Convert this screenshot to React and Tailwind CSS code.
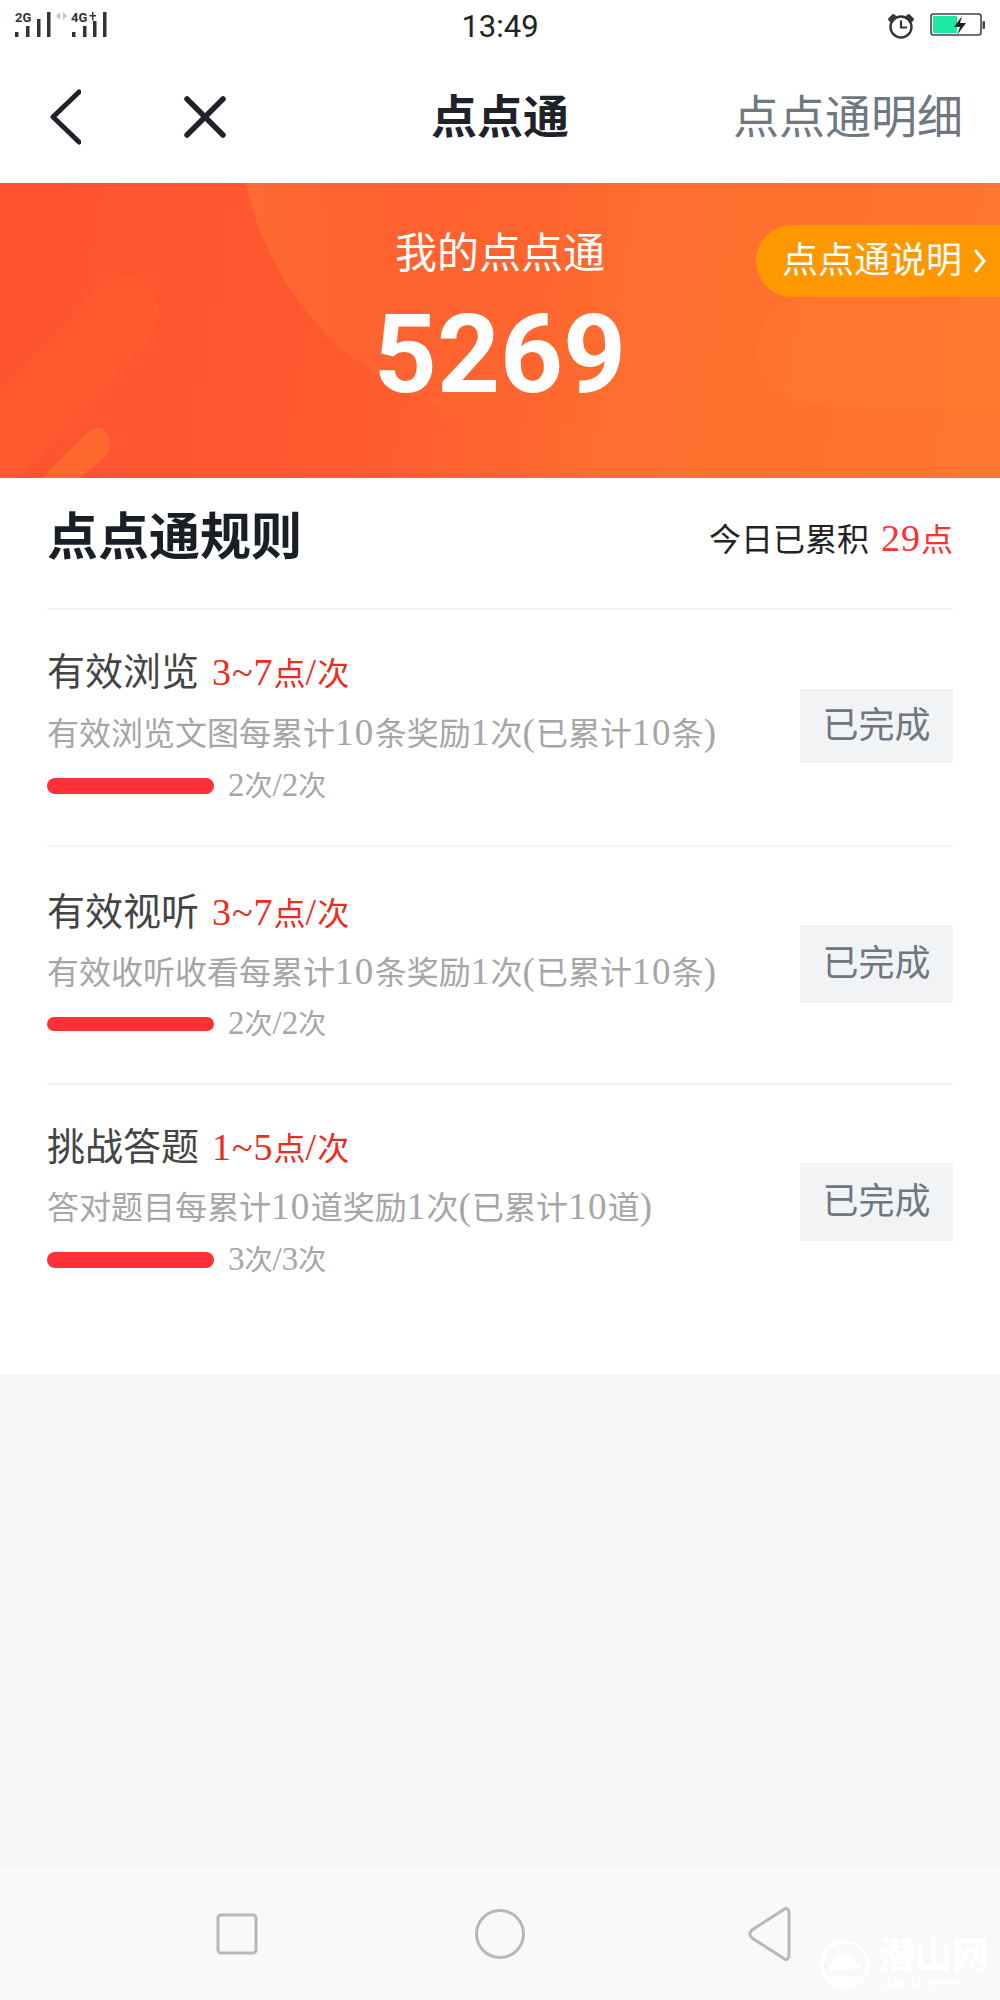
import React from 'react';

const serif = 'font-["Liberation_Serif","Noto_Sans_CJK_SC",serif]';
const sans = 'font-["Roboto","Noto_Sans_CJK_SC",sans-serif]';

const rules = [
  {
    title: '有效浏览',
    points: '3~7',
    desc: '有效浏览文图每累计10条奖励1次(已累计10条)',
    count: '2次/2次',
    rowClass: 'h-[237px] pt-[39px] border-b-2',
    descClass: 'mt-[16px]',
    barRowClass: 'mt-[13px]',
    barClass: 'h-[16px]',
    btnClass: 'h-[74px] mt-[40px]',
  },
  {
    title: '有效视听',
    points: '3~7',
    desc: '有效收听收看每累计10条奖励1次(已累计10条)',
    count: '2次/2次',
    rowClass: 'h-[238px] pt-[42px] border-b-2',
    descClass: 'mt-[15px]',
    barRowClass: 'mt-[12px]',
    barClass: 'h-[14px]',
    btnClass: 'h-[78px] mt-[36px]',
  },
  {
    title: '挑战答题',
    points: '1~5',
    desc: '答对题目每累计10道奖励1次(已累计10道)',
    count: '3次/3次',
    rowClass: 'h-[236px] pt-[39px]',
    descClass: 'mt-[15px]',
    barRowClass: 'mt-[13px]',
    barClass: 'h-[16px]',
    btnClass: 'h-[78px] mt-[39px]',
  },
];

// latin runs sit larger than the CJK around them in the reference
function Mixed({ text, latinClass }) {
  return text.split(/([0-9~/()]+)/).map((part, i) =>
    i % 2 === 1 ? (
      <span key={i} className={latinClass}>
        {part}
      </span>
    ) : (
      part
    )
  );
}

function StatusBar() {
  return (
    <div className={`h-[55px] grid grid-cols-[1fr_auto_1fr] items-start ${sans}`}>
      <svg width="120" height="55" viewBox="0 0 120 55">
        <g fill="#333">
          <text x="15" y="22" fontSize="13" fontWeight="700" fontFamily="Roboto">2G</text>
          <rect x="15" y="32" width="3.5" height="5" />
          <rect x="26" y="26" width="3.5" height="11" />
          <rect x="37" y="19" width="3.5" height="18" />
          <rect x="47" y="12" width="3.5" height="25" />
          <text x="71" y="22" fontSize="13" fontWeight="700" fontFamily="Roboto">4G</text>
          <path d="M92 12h1.5v3h2.5v1.5h-2.5v4h-1.5v-4h-2.5V15h2.5z" />
          <rect x="72" y="32" width="3.5" height="5" />
          <rect x="83" y="26" width="3.5" height="11" />
          <rect x="93" y="21" width="3.5" height="16" />
          <rect x="103" y="12" width="3.5" height="25" />
        </g>
        <path d="M60 12v8l-4-4zM63 12v8l4-4z" fill="#c4c4c4" />
      </svg>
      <span className="text-[31px] leading-[54px] text-[#222]">13:49</span>
      <div className="flex items-start justify-end gap-[15px] pr-[15px] pt-[12px]">
        <svg width="28" height="27" viewBox="0 0 28 27" fill="none" stroke="#333">
          <circle cx="14" cy="15" r="10.5" strokeWidth="2.4" />
          <path d="M14 8.5v7h6" strokeWidth="2.2" />
          <path d="M1 7l5-5 3 2-6 6zM27 7l-5-5-3 2 6 6z" fill="#333" strokeWidth="0.5" />
        </svg>
        <svg width="55" height="24" viewBox="0 0 55 24" className="mt-[1px]">
          <rect x="1" y="1" width="50" height="21" rx="2.5" fill="#fff" stroke="#444" strokeWidth="1.6" />
          <rect x="3" y="3" width="24" height="17" fill="#1de9a4" />
          <rect x="52.5" y="8" width="2.5" height="8" rx="1" fill="#444" />
          <path d="M32 3l-8 11h6l-3 8 9-12h-6z" fill="#222" />
        </svg>
      </div>
    </div>
  );
}

function TopNav() {
  return (
    <div className={`h-[128px] grid grid-cols-[1fr_auto_1fr] items-center pb-[4px] ${sans}`}>
      <div className="flex items-center gap-[103px] pl-[50px]">
        <svg width="31" height="56" viewBox="0 0 31 56" fill="none" stroke="#1f2329" strokeWidth="5" strokeLinecap="round" strokeLinejoin="round">
          <path d="M29 3L3 28l26 25" />
        </svg>
        <svg width="42" height="42" viewBox="0 0 42 42" fill="none" stroke="#1f2329" strokeWidth="5.5" strokeLinecap="round">
          <path d="M3 3l36 36M39 3L3 39" />
        </svg>
      </div>
      <h1 className="text-[46px] font-bold text-[#1f2329] leading-none">点点通</h1>
      <span className="text-[46px] text-[#6f7780] leading-none whitespace-nowrap justify-self-end pr-[37px]">点点通明细</span>
    </div>
  );
}

function Banner() {
  return (
    <section className={`relative h-[295px] overflow-hidden bg-[linear-gradient(100deg,#ff5230_0%,#ff5a30_38%,#ff6d2f_62%,#ff772e_100%)] ${sans}`}>
      <svg className="absolute inset-0" width="1000" height="295" viewBox="0 0 1000 295">
        <defs>
          <linearGradient id="arc" x1="240" x2="520" y1="0" y2="0" gradientUnits="userSpaceOnUse">
            <stop offset="0" stopColor="#ff7330" stopOpacity="0.7" />
            <stop offset="1" stopColor="#ff7330" stopOpacity="0" />
          </linearGradient>
        </defs>
        <circle cx="540" cy="-60" r="300" fill="url(#arc)" />
        <path d="M0 205L90 112c20-24 55-26 66 2 6 16 3 30-8 44L20 295H0z" fill="#ff7a2e" opacity="0.16" />
        <path d="M42 295L85 252c8-10 20-10 24 2 3 8 0 14-4 20L80 295z" fill="#ff7a2e" opacity="0.55" />
        <path d="M759 170c0-50 40-80 110-80h131v135H860c-60 0-101-10-101-55z" fill="#ff8430" opacity="0.22" />
      </svg>
      <div className="relative flex flex-col items-center text-white pt-[45px]">
        <p className="text-[42px] leading-[52px]">我的点点通</p>
        <p className="text-[110px] font-bold leading-[132px] mt-[9px]">5269</p>
      </div>
      <div className="absolute right-0 top-[42px] w-[244px] h-[72px] rounded-l-[36px] bg-[#ff9800] flex items-center pl-[26px] text-white text-[36px] whitespace-nowrap">
        点点通说明
        <svg width="16" height="28" viewBox="0 0 16 28" fill="none" stroke="#fff" strokeWidth="3" className="ml-[10px]">
          <path d="M3 3l9 11-9 11" />
        </svg>
      </div>
    </section>
  );
}

function RuleRow({ rule }) {
  return (
    <div className={`${rule.rowClass} flex items-start justify-between border-[#f4f4f6]`}>
      <div>
        <div className="flex items-baseline h-[46px]">
          <span className="text-[38px] leading-[46px] text-[#444]">{rule.title}</span>
          <span className="text-[32px] leading-[46px] text-[#ee2a20] ml-[13px]">
            <Mixed text={`${rule.points}点/次`} latinClass="text-[38px] tracking-[1px]" />
          </span>
        </div>
        <p className={`${rule.descClass} h-[44px] text-[32px] leading-[44px] text-[#a6a6a6] whitespace-nowrap`}>
          <Mixed text={rule.desc} latinClass="text-[37px] tracking-[1.3px]" />
        </p>
        <div className={`${rule.barRowClass} flex items-center gap-[14px] h-[36px]`}>
          <div className={`${rule.barClass} w-[167px] rounded-full bg-[#ff3036]`} />
          <span className="text-[28px] leading-[36px] text-[#a6a6a6]">
            <Mixed text={rule.count} latinClass="text-[33px]" />
          </span>
        </div>
      </div>
      <div className={`${rule.btnClass} w-[153px] bg-[#f2f3f5] flex items-center justify-center text-[36px] text-[#6f7780] ${sans}`}>
        已完成
      </div>
    </div>
  );
}

function Rules() {
  return (
    <section className={`bg-white px-[47px] h-[897px] ${serif}`}>
      <div className="h-[132px] flex items-center justify-between border-b-2 border-[#f4f4f6] pb-[10px]">
        <h2 className="text-[51px] font-bold text-[#1a1f26] leading-none">点点通规则</h2>
        <p className="text-[32px] text-[#222] leading-none flex items-baseline">
          今日已累积
          <span className="text-[#ff3030] ml-[12px]">
            <Mixed text="29点" latinClass="text-[38px] tracking-[1px]" />
          </span>
        </p>
      </div>
      {rules.map((rule) => (
        <RuleRow key={rule.title} rule={rule} />
      ))}
    </section>
  );
}

function SystemNav() {
  return (
    <div className="relative h-[133px] bg-[#f9f9f9] flex items-center justify-center">
      <svg width="1000" height="60" viewBox="0 0 1000 60" fill="none" stroke="#b8b8b8" strokeWidth="3">
        <rect x="218" y="11" width="38" height="38" rx="3" />
        <circle cx="500" cy="30" r="23.5" />
        <path d="M783 6c3-3 6-1 6 3v42c0 4-3 6-6 3L752 34c-3-3-3-5 0-8z" />
      </svg>
      {/* watermark */}
      <div className="absolute left-[820px] top-[72px] flex items-start gap-[8px] text-white">
        <svg width="50" height="52" viewBox="0 0 50 52" fill="none" stroke="#fff" strokeWidth="3">
          <circle cx="25" cy="26" r="23" />
          <path d="M8 30L20 10l6 6 4-4 12 20c-10-6-22 2-34-2z" fill="#fff" stroke="none" />
          <path d="M8 38c10-6 20 4 34-2-4 8-12 13-18 13-6 0-12-4-16-11z" fill="#fff" stroke="none" />
        </svg>
        <div className={`flex flex-col ${sans}`}>
          <span className="text-[37px] font-bold leading-[36px]">潜山网</span>
          <span className="text-[15px] leading-[17px] tracking-[0.6px]">qianshanren.cn</span>
        </div>
      </div>
    </div>
  );
}

export default function App() {
  return (
    <div className="w-[1000px] h-[2000px] flex flex-col bg-[#f6f6f6]">
      <div className="bg-white">
        <StatusBar />
        <TopNav />
      </div>
      <Banner />
      <Rules />
      <div className="flex-1" />
      <SystemNav />
    </div>
  );
}
